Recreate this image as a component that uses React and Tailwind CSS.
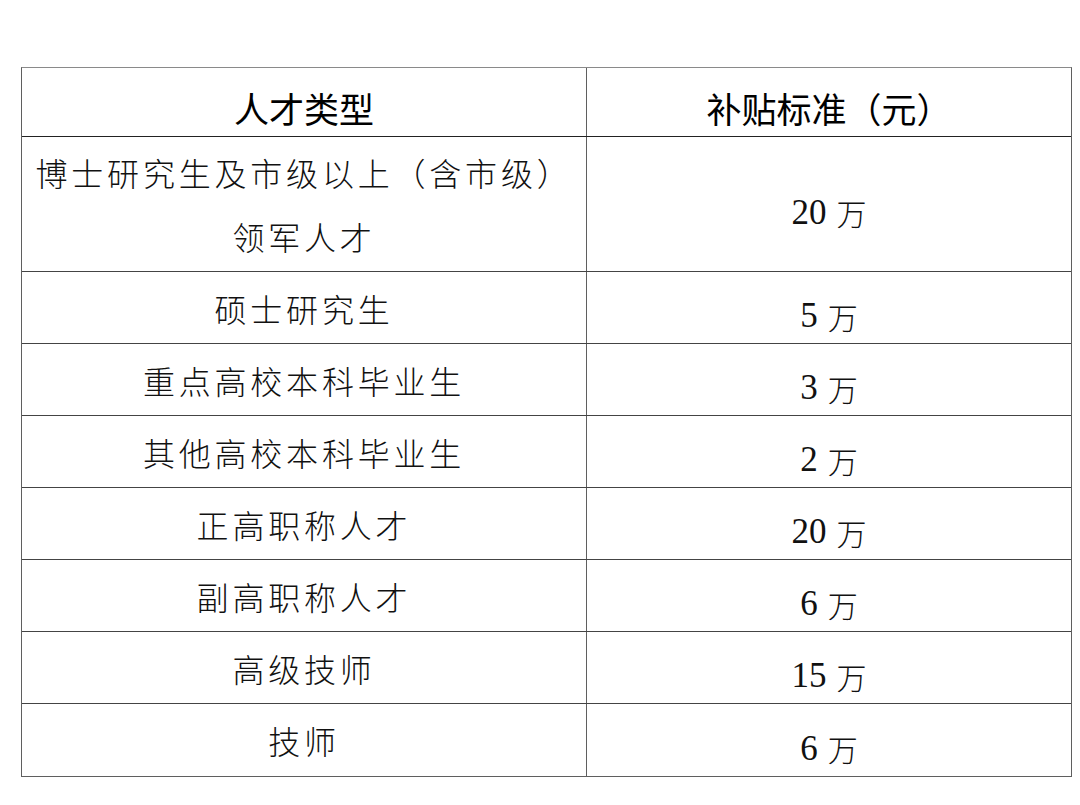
const rows = [
  { name: ['博士研究生及市级以上（含市级）', '领军人才'], num: '20', tall: true },
  { name: ['硕士研究生'], num: '5' },
  { name: ['重点高校本科毕业生'], num: '3' },
  { name: ['其他高校本科毕业生'], num: '2' },
  { name: ['正高职称人才'], num: '20' },
  { name: ['副高职称人才'], num: '6' },
  { name: ['高级技师'], num: '15' },
  { name: ['技师'], num: '6' },
];

const App = () => {
  return (
    <div className="w-[1080px] h-[805px] bg-white pt-[67px] pl-[21px] text-black">
      <div className="w-[1051px] border border-[#5f5f5f] border-t-[#8a8a8a]">
        {/* Header */}
        <div className="flex h-[69px] border-b border-[#222]">
          <div className="w-[565px] border-r border-[#5f5f5f] flex items-center justify-center pt-[10px] font-['Noto_Sans_CJK_SC',sans-serif] font-normal text-[35px] leading-none">
            人才类型
          </div>
          <div className="flex-1 flex items-center justify-center pt-[10px] font-['Noto_Sans_CJK_SC',sans-serif] font-normal text-[35px] leading-none">
            补贴标准（元）
          </div>
        </div>

        {/* Body rows */}
        {rows.map((row, i) => (
          <div
            key={i}
            className={`flex border-b border-[#444] last:border-b-0 ${
              row.tall ? 'h-[135px]' : 'h-[72px]'
            }`}
          >
            <div className="w-[565px] border-r border-[#5f5f5f] flex flex-col items-center justify-center font-['Noto_Sans_CJK_SC',sans-serif] font-light text-[32px] tracking-[3.8px] leading-[64px] text-[#111] whitespace-nowrap">
              {row.name.map((line, j) => (
                <span key={j}>{line}</span>
              ))}
            </div>
            <div className="flex-1 flex items-center justify-center pt-[16px] leading-none text-[#111]">
              <span className="font-['Liberation_Serif',serif] text-[35px]">{row.num}</span>
              <span className="ml-[10px] font-['Noto_Sans_CJK_SC',sans-serif] font-light text-[30px]">万</span>
            </div>
          </div>
        ))}
      </div>
    </div>
  );
};

export default App;
